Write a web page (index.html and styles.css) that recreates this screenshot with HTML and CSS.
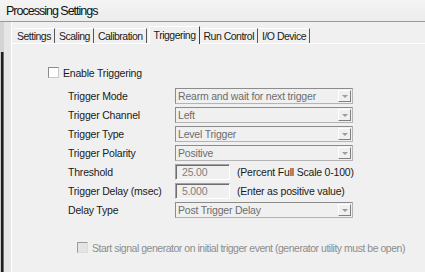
FILE: index.html
```html
<!DOCTYPE html>
<html lang="en">
<head>
  <meta charset="UTF-8">
  <title>Processing Settings</title>
  <link rel="stylesheet" href="styles.css">
</head>
<body>

  <div class="titlebar">Processing Settings</div>

  <div class="main">
    <div class="edge"></div>
    <div class="gap"></div>
    <div class="dialog">
      <div class="tabs">
        <span class="tab first">Settings</span>
        <span class="tab">Scaling</span>
        <span class="tab">Calibration</span>
        <span class="tab active">Triggering</span>
        <span class="tab">Run Control</span>
        <span class="tab">I/O Device</span>
      </div>

      <div class="panel">
        <label class="check">
          <span class="box"></span>
          Enable Triggering
        </label>

        <div class="form">
          <div class="row">
            <span class="lbl">Trigger Mode</span>
            <div class="combo"><span>Rearm and wait for next trigger</span><i class="btn"></i></div>
          </div>
          <div class="row">
            <span class="lbl">Trigger Channel</span>
            <div class="combo"><span>Left</span><i class="btn"></i></div>
          </div>
          <div class="row">
            <span class="lbl">Trigger Type</span>
            <div class="combo"><span>Level Trigger</span><i class="btn"></i></div>
          </div>
          <div class="row">
            <span class="lbl">Trigger Polarity</span>
            <div class="combo"><span>Positive</span><i class="btn"></i></div>
          </div>
          <div class="row">
            <span class="lbl">Threshold</span>
            <div class="edit">25.00</div>
            <span class="note">(Percent Full Scale 0-100)</span>
          </div>
          <div class="row">
            <span class="lbl">Trigger Delay (msec)</span>
            <div class="edit">5.000</div>
            <span class="note">(Enter as positive value)</span>
          </div>
          <div class="row">
            <span class="lbl">Delay Type</span>
            <div class="combo"><span>Post Trigger Delay</span><i class="btn"></i></div>
          </div>
        </div>

        <label class="check disabled">
          <span class="box"></span>
          Start signal generator on initial trigger event (generator utility must be open)
        </label>
      </div>
    </div>
  </div>

</body>
</html>
```

FILE: styles.css
```css
body {
  margin: 0;
  padding: 0;
  width: 425px;
  height: 272px;
  overflow: hidden;
  background: #f0f0f0;
  font-family: 'Liberation Sans', Arial, sans-serif;
  font-size: 10.5px;
  letter-spacing: -0.2px;
  color: #1a1a1a;
}

.titlebar {
  height: 22px;
  line-height: 22px;
  padding-left: 6px;
  font-size: 12.5px;
  letter-spacing: -1px;
  color: #111;
  background: linear-gradient(to bottom, #f4f4f4, #ececec);
  border-bottom: 1px solid #9a9a9a;
  box-sizing: border-box;
}

.main {
  display: flex;
  height: 250px;
}

.edge {
  width: 4px;
  border-top: 30px solid #d4d4d4;
  background: linear-gradient(to right, #c8c8c8 0, #c8c8c8 1px, #1e1e1e 1px, #1e1e1e 3px, #707070 3px);
}

.gap {
  width: 7px;
  background: #e6e6e6;
  border-right: 1px solid #ffffff;
}

.dialog {
  flex: 1;
  padding-top: 3px;
}

.tabs {
  display: flex;
  height: 18px;
  align-items: flex-end;
  padding-left: 2px;
  letter-spacing: -0.5px;
}

.tab {
  height: 15px;
  line-height: 15px;
  padding: 0 3px 0 3px;
  border-right: 1px solid #555;
  border-top: 1px solid #ffffff;
  box-sizing: border-box;
  white-space: nowrap;
  margin-right: 1px;
}

.tab.active {
  height: 18px;
  line-height: 16px;
  padding: 0 3px 0 4px;
  margin: 0 1px 0 1px;
  border-left: 1px solid #ffffff;
  border-right: 1px solid #404040;
  position: relative;
  top: 1px;
  background: #f0f0f0;
}

.panel {
  border-top: 1px solid #ffffff;
  padding: 23px 0 0 36px;
}

.check {
  display: flex;
  align-items: center;
  gap: 4px;
  height: 11px;
}

.box {
  width: 9px;
  height: 9px;
  background: #ffffff;
  border: 1px solid #8a8a8a;
  border-right-color: #c8c8c8;
  border-bottom-color: #c8c8c8;
}

.check.disabled {
  margin: 24px 0 0 29px;
  gap: 4px;
  color: #8d8d8d;
  letter-spacing: -0.48px;
}

.check.disabled .box {
  background: #e4e4e4;
  border-color: #9a9a9a #dcdcdc #dcdcdc #9a9a9a;
}

.form {
  margin-top: 10px;
  padding-left: 20px;
  display: flex;
  flex-direction: column;
  gap: 3px;
}

.row {
  display: flex;
  align-items: center;
  height: 16px;
}

.lbl {
  width: 107px;
}

.combo {
  width: 178px;
  height: 16px;
  box-sizing: border-box;
  border: 1px solid #8c8c8c;
  border-right-color: #b4b4b4;
  border-bottom-color: #b4b4b4;
  display: flex;
  align-items: center;
  justify-content: space-between;
  padding-left: 2px;
  color: #6d6d6d;
  background: #f0f0f0;
}

.btn {
  width: 13px;
  height: 12px;
  margin-right: 1px;
  box-sizing: border-box;
  border: 1px solid #ffffff;
  border-right-color: #808080;
  border-bottom-color: #808080;
  display: flex;
  align-items: center;
  justify-content: center;
}

.btn::after {
  content: "";
  border-left: 3px solid transparent;
  border-right: 3px solid transparent;
  border-top: 3px solid #9c9c9c;
}

.edit {
  width: 55px;
  height: 16px;
  box-sizing: border-box;
  border: 1px solid #a0a0a0;
  border-right-color: #ffffff;
  border-bottom-color: #ffffff;
  box-shadow: inset 1px 1px 0 #6e6e6e;
  padding-left: 6px;
  line-height: 14px;
  color: #808080;
  background: #f0f0f0;
}

.note {
  margin-left: 7px;
}
```
